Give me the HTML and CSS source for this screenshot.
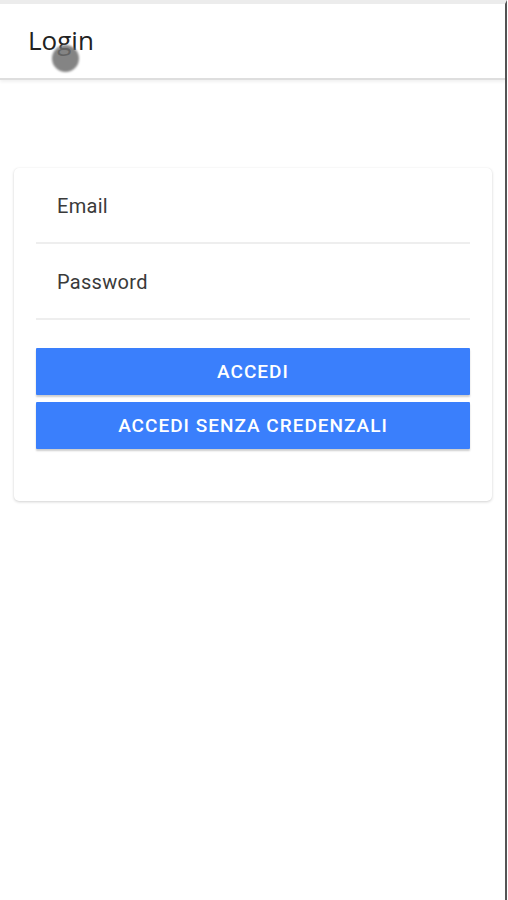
FILE: index.html
```html
<!DOCTYPE html>
<html lang="it">
<head>
  <meta charset="UTF-8" />
  <title>Login</title>
  <link rel="stylesheet" href="styles.css">
</head>
<body>
  <div class="frame">
    <header class="toolbar">
      <h1>Login</h1>
      <span class="touch"></span>
    </header>

    <main class="content">
      <form class="card" onsubmit="return false;">
        <label class="field">
          <input type="email" placeholder="Email" />
        </label>
        <label class="field">
          <input type="password" placeholder="Password" />
        </label>
        <div class="actions">
          <button type="submit">Accedi</button>
          <button type="button">Accedi senza credenzali</button>
        </div>
      </form>
    </main>
  </div>
</body>
</html>
```

FILE: styles.css
```css
html, body {
  margin: 0;
  height: 100%;
}

body {
  font-family: Roboto, "Noto Sans", sans-serif;
  background-color: #fff;
  color: #333;
}

.frame {
  height: 100%;
  box-sizing: border-box;
  border-top: 4px solid #ececec;
  border-right: 2px solid #555;
  margin-right: 1px;
  background-color: #fff;
}

.toolbar {
  position: relative;
  height: 74px;
  background-color: #fff;
  border-bottom: 2px solid #dedede;
  box-shadow: 0 2px 3px rgba(0, 0, 0, 0.06);
  padding-left: 28px;
  display: flex;
  align-items: center;
}

.toolbar h1 {
  margin: 0 0 3px;
  font-family: "Open Sans", sans-serif;
  font-size: 26px;
  font-weight: 400;
  color: #222;
}

.touch {
  position: absolute;
  left: 52px;
  top: 41px;
  width: 27px;
  height: 27px;
  border-radius: 50%;
  background-color: rgba(110, 110, 110, 0.85);
  filter: blur(1px);
}

.content {
  padding: 88px 13px 0 14px;
}

.card {
  background-color: #fff;
  border-radius: 5px;
  box-shadow: 0 1px 3px rgba(0, 0, 0, 0.18), 0 0 1px rgba(0, 0, 0, 0.06);
  padding: 0 22px 52px;
}

.field {
  display: block;
  border-bottom: 2px solid #eee;
}

.field input {
  display: block;
  width: 100%;
  box-sizing: border-box;
  height: 74px;
  padding: 2px 21px 0;
  border: none;
  outline: none;
  background: transparent;
  font-family: Roboto, sans-serif;
  font-size: 20px;
  letter-spacing: 0.3px;
  color: #333;
}

.field input::placeholder {
  color: #3a3a3a;
}

.actions {
  margin-top: 28px;
  display: flex;
  flex-direction: column;
  gap: 7px;
}

button {
  height: 47px;
  border: none;
  border-radius: 1px;
  background-color: #3a7ffc;
  color: #fff;
  font-family: Roboto, sans-serif;
  font-size: 19px;
  font-weight: 500;
  letter-spacing: 1px;
  text-transform: uppercase;
  box-shadow: 0 2px 2px rgba(0, 0, 0, 0.2);
  cursor: pointer;
}
```
